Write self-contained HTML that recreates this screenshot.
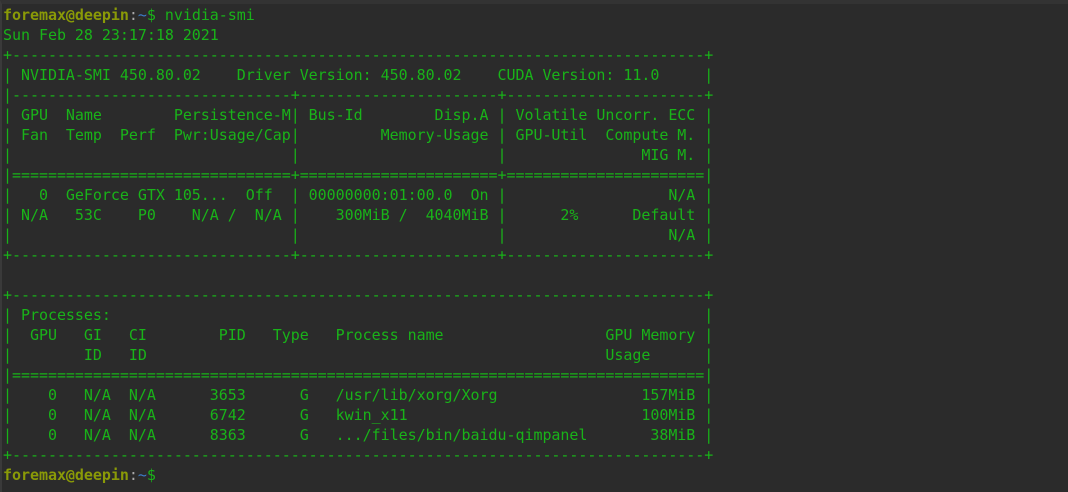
<!DOCTYPE html>
<html><head><meta charset="utf-8"><style>
html,body{margin:0;padding:0;background:#2b2b2b;width:1068px;height:492px;overflow:hidden}
body{border-left:2px solid #3a3a3a;box-sizing:border-box;border-top:4px solid #333}
pre{margin:0;padding:1px 0 0 1px;font-family:"DejaVu Sans Mono","Liberation Mono",monospace;font-size:15px;line-height:20px;letter-spacing:-0.04px;color:#19b319}
.u{color:#8a9a07;font-weight:bold}.t{color:#3d7cc9}.w{color:#a8a8a8}
</style></head><body><pre><span class="u">foremax@deepin</span><span class="w">:</span><span class="t">~</span>$ nvidia-smi
Sun Feb 28 23:17:18 2021
+-----------------------------------------------------------------------------+
| NVIDIA-SMI 450.80.02    Driver Version: 450.80.02    CUDA Version: 11.0     |
|-------------------------------+----------------------+----------------------+
| GPU  Name        Persistence-M| Bus-Id        Disp.A | Volatile Uncorr. ECC |
| Fan  Temp  Perf  Pwr:Usage/Cap|         Memory-Usage | GPU-Util  Compute M. |
|                               |                      |               MIG M. |
|===============================+======================+======================|
|   0  GeForce GTX 105...  Off  | 00000000:01:00.0  On |                  N/A |
| N/A   53C    P0    N/A /  N/A |    300MiB /  4040MiB |      2%      Default |
|                               |                      |                  N/A |
+-------------------------------+----------------------+----------------------+

+-----------------------------------------------------------------------------+
| Processes:                                                                  |
|  GPU   GI   CI        PID   Type   Process name                  GPU Memory |
|        ID   ID                                                   Usage      |
|=============================================================================|
|    0   N/A  N/A      3653      G   /usr/lib/xorg/Xorg                157MiB |
|    0   N/A  N/A      6742      G   kwin_x11                          100MiB |
|    0   N/A  N/A      8363      G   .../files/bin/baidu-qimpanel       38MiB |
+-----------------------------------------------------------------------------+
<span class="u">foremax@deepin</span><span class="w">:</span><span class="t">~</span>$</pre></body></html>
